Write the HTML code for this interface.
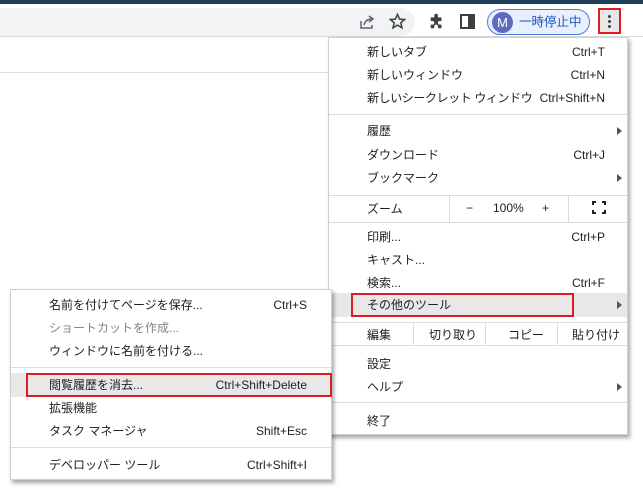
<!DOCTYPE html>
<html><head><meta charset="utf-8"><style>
*{margin:0;padding:0;box-sizing:border-box}
body{width:643px;height:489px;overflow:hidden;background:#fff;position:relative;font-family:"Liberation Sans","Noto Sans CJK JP",sans-serif;font-size:12px;color:#202124}
.a{position:absolute}
.t{position:absolute;white-space:nowrap;line-height:14px}
.r{position:absolute;white-space:nowrap;line-height:14px;right:38px}
.rs{position:absolute;white-space:nowrap;line-height:14px;right:336px}
.sep{position:absolute;height:1px;background:#dadce0}
.menu{position:absolute;background:#fff;border:1px solid #d0d0d0;box-shadow:2px 3px 4px rgba(0,0,0,.35)}
.vl{position:absolute;width:1px;background:#dadce0}
.tri{position:absolute;width:0;height:0;border-left:5px solid #555;border-top:4px solid transparent;border-bottom:4px solid transparent}
</style></head><body>
<div class="a" style="left:0;top:0;width:643px;height:4px;background:#1d3f5a"></div>
<div class="a" style="left:0;top:4px;width:643px;height:32px;background:#fff"></div>
<div class="a" style="left:-20px;top:8px;width:435px;height:28px;background:#f1f3f4;border-radius:14px"></div>
<div class="a" style="left:0;top:36px;width:643px;height:1px;background:#dadce0"></div>
<div class="a" style="left:0;top:72px;width:330px;height:1px;background:#dadce0"></div>
<svg class="a" style="left:357px;top:12px" width="20" height="20" viewBox="0 0 20 20" fill="none" stroke="#5f6368" stroke-width="1.5"><path d="M4 9v7h11v-3"/><path d="M7 13c1-4 4-6 8-6"/><path d="M12 4l4 3-4 3"/></svg>
<svg class="a" style="left:388px;top:12px" width="19" height="19" viewBox="0 0 20 20" fill="none" stroke="#3c4043" stroke-width="1.6"><path d="M10 2.5l2.2 5 5.3.4-4 3.5 1.2 5.2L10 13.8 5.3 16.6l1.2-5.2-4-3.5 5.3-.4z"/></svg>
<svg class="a" style="left:428px;top:12px" width="18" height="18" viewBox="0 0 20 20" fill="#3c4043"><path d="M3 6h4V4a2 2 0 014 0v2h4v4h-2a2 2 0 000 4h2v4H11v-2a2 2 0 00-4 0v2H3v-4h2a2 2 0 000-4H3z"/></svg>
<svg class="a" style="left:460px;top:14px" width="15" height="15" viewBox="0 0 15 15"><rect x="1" y="1" width="13" height="13" fill="none" stroke="#3c4043" stroke-width="2"/><rect x="8" y="1" width="6" height="13" fill="#3c4043"/></svg>
<div class="a" style="left:487px;top:9px;width:103px;height:26px;border:1.5px solid #4a7fd8;border-radius:13px;background:#e8f0fe"></div>
<div class="a" style="left:492px;top:12px;width:21px;height:21px;border-radius:50%;background:#5c6bc0;color:#fff;font-size:13px;line-height:21px;text-align:center">M</div>
<div class="t" style="left:519px;top:15px;color:#1a56c4;font-size:12.5px">一時停止中</div>
<div class="a" style="left:598px;top:8px;width:23px;height:26px;border:2px solid #e11b22;background:#e8e8e8"></div>
<div class="a" style="left:608px;top:15px;width:3px;height:3px;border-radius:50%;background:#3c4043;box-shadow:0 5px 0 #3c4043,0 10px 0 #3c4043"></div>

<div class="menu" style="left:328px;top:37px;width:300px;height:398px"></div>
<div class="t" style="left:367px;top:45px">新しいタブ</div><div class="r" style="top:45px">Ctrl+T</div>
<div class="t" style="left:367px;top:68px">新しいウィンドウ</div><div class="r" style="top:68px">Ctrl+N</div>
<div class="t" style="left:367px;top:91px;letter-spacing:-0.4px">新しいシークレット ウィンドウ</div><div class="r" style="top:91px">Ctrl+Shift+N</div>
<div class="sep" style="left:329px;top:114px;width:298px"></div>
<div class="t" style="left:367px;top:124px">履歴</div><div class="tri" style="left:617px;top:127px"></div>
<div class="t" style="left:367px;top:148px">ダウンロード</div><div class="r" style="top:148px">Ctrl+J</div>
<div class="t" style="left:367px;top:171px">ブックマーク</div><div class="tri" style="left:617px;top:174px"></div>
<div class="sep" style="left:329px;top:195px;width:298px"></div>
<div class="t" style="left:367px;top:202px">ズーム</div>
<div class="vl" style="left:449px;top:196px;height:26px"></div>
<div class="t" style="left:466px;top:201px">−</div>
<div class="t" style="left:493px;top:201px">100%</div>
<div class="t" style="left:542px;top:201px">+</div>
<div class="vl" style="left:568px;top:196px;height:26px"></div>
<svg class="a" style="left:592px;top:201px" width="14" height="13" viewBox="0 0 14 13" fill="none" stroke="#202124" stroke-width="2"><path d="M1 4V1h3M10 1h3v3M13 9v3h-3M4 12H1V9"/></svg>
<div class="sep" style="left:329px;top:222px;width:298px"></div>
<div class="t" style="left:367px;top:230px">印刷...</div><div class="r" style="top:230px">Ctrl+P</div>
<div class="t" style="left:367px;top:253px">キャスト...</div>
<div class="t" style="left:367px;top:276px">検索...</div><div class="r" style="top:276px">Ctrl+F</div>
<div class="a" style="left:329px;top:293px;width:298px;height:24px;background:#e8e8e8"></div>
<div class="a" style="left:351px;top:293px;width:223px;height:24px;border:2px solid #e11b22"></div>
<div class="t" style="left:367px;top:298px">その他のツール</div><div class="tri" style="left:617px;top:301px"></div>
<div class="sep" style="left:329px;top:322px;width:298px"></div>
<div class="t" style="left:367px;top:328px">編集</div>
<div class="vl" style="left:413px;top:323px;height:22px"></div>
<div class="t" style="left:429px;top:328px">切り取り</div>
<div class="vl" style="left:485px;top:323px;height:22px"></div>
<div class="t" style="left:508px;top:328px">コピー</div>
<div class="vl" style="left:557px;top:323px;height:22px"></div>
<div class="t" style="left:572px;top:328px">貼り付け</div>
<div class="sep" style="left:329px;top:345px;width:298px"></div>
<div class="t" style="left:367px;top:357px">設定</div>
<div class="t" style="left:367px;top:380px">ヘルプ</div><div class="tri" style="left:617px;top:383px"></div>
<div class="sep" style="left:329px;top:402px;width:298px"></div>
<div class="t" style="left:367px;top:414px">終了</div>

<div class="menu" style="left:10px;top:289px;width:322px;height:191px"></div>
<div class="t" style="left:49px;top:298px">名前を付けてページを保存...</div><div class="rs" style="top:298px">Ctrl+S</div>
<div class="t" style="left:49px;top:321px;color:#80868b">ショートカットを作成...</div>
<div class="t" style="left:49px;top:344px">ウィンドウに名前を付ける...</div>
<div class="sep" style="left:11px;top:367px;width:320px"></div>
<div class="a" style="left:11px;top:373px;width:320px;height:24px;background:#e8e8e8"></div>
<div class="a" style="left:26px;top:373px;width:306px;height:24px;border:2px solid #e11b22"></div>
<div class="t" style="left:49px;top:378px">閲覧履歴を消去...</div><div class="rs" style="top:378px">Ctrl+Shift+Delete</div>
<div class="t" style="left:49px;top:401px">拡張機能</div>
<div class="t" style="left:49px;top:424px">タスク マネージャ</div><div class="rs" style="top:424px">Shift+Esc</div>
<div class="sep" style="left:11px;top:447px;width:320px"></div>
<div class="t" style="left:49px;top:458px">デベロッパー ツール</div><div class="rs" style="top:458px">Ctrl+Shift+I</div>
</body></html>
